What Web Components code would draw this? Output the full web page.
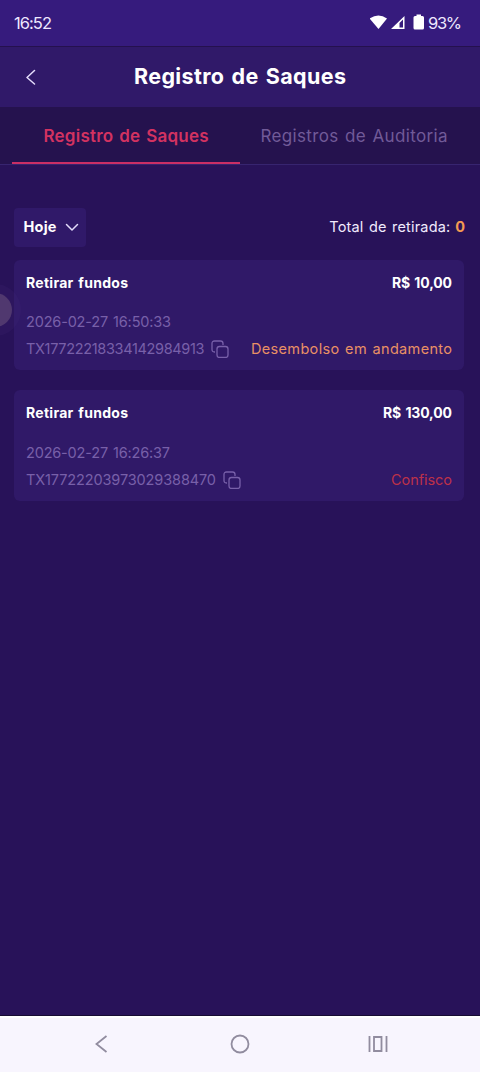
<!DOCTYPE html>
<html lang="pt-BR">
<head>
<meta charset="utf-8">
<title>Registro de Saques</title>
<style>
html,body{margin:0;height:100%;background:#281259}
body{font-family:Inter,"Noto Sans",sans-serif;color:#fff;overflow:hidden}
</style>
</head>
<body>
<withdraw-app></withdraw-app>
<script>
const define = (name, html, ready) => {
  const t = document.createElement('template');
  t.innerHTML = html;
  customElements.define(name, class extends HTMLElement {
    connectedCallback() {
      if (this.shadowRoot) return;
      this.attachShadow({mode: 'open'}).append(t.content.cloneNode(true));
      if (ready) ready(this, this.shadowRoot);
    }
  });
};

// A single line of text whose tracking is adjusted to fill the width in "w".
define('fit-text', `<style>
:host{display:block;white-space:nowrap;flex:none}
span{display:inline-block;word-spacing:.08em}
</style><span><slot></slot></span>`, (el, root) => {
  const w = +el.getAttribute('w');
  const span = root.querySelector('span');
  const n = el.textContent.length;
  const gap = (w - span.getBoundingClientRect().width) / (n - 1 || 1);
  span.style.letterSpacing = gap + 'px';
  span.style.marginRight = -gap + 'px';
});

define('status-bar', `<style>
:host{display:flex;box-sizing:border-box;height:47px;padding:0 18px 0 14px;align-items:center;background:#361b7d;border-bottom:1px solid #25114e;color:#eee8ff;font-size:16.5px;line-height:47px}
.icons{display:flex;margin-left:auto;align-items:center}
svg{display:block;fill:#fff}
</style>
<fit-text w="38">16:52</fit-text>
<div class="icons">
<svg width="58" height="20" viewBox="0 0 58 20"><path d="M-.5 5.500Q8.500 -.700 17 5.500L8.500 16Z"/><path fill-rule="evenodd" d="M21 16 34.500 3V16ZM29.500 10V14.500H33V6.500Z"/><path d="M46.500 1.500h4.500v1.500H52.500q1.500 0 1.500 1.500v10.500q0 1.500-1.500 1.500h-7.500q-1.500 0-1.500-1.500V4.500q0-1.500 1.500-1.500H46.500z"/></svg>
<fit-text w="34">93%</fit-text>
</div>`);

define('page-header', `<style>
:host{display:grid;grid-template-columns:60px 1fr 60px;align-items:center;height:60px;background:#301969}
svg{margin-left:25px;display:block}
.title{justify-self:center;font-size:21.500px;font-weight:700;line-height:58px;padding-bottom:2px}
</style>
<svg width="12" height="16" viewBox="0 0 12 16" fill="none" stroke="#e4dcfb" stroke-width="1.500" stroke-linecap="round" stroke-linejoin="round"><path d="M9.500 1.500 2 8.500 9.500 15"/></svg>
<div class="title"><slot></slot></div>`);

define('tab-bar', `<style>
:host{display:flex;box-sizing:border-box;height:58px;padding:0 12px;background:#25124e;border-bottom:1px solid #37246f}
div{flex:1;display:flex;box-sizing:border-box;justify-content:center;font-size:17px;line-height:58px;color:#715a98}
.on{color:#d33261;font-weight:600;border-bottom:2px solid #ca2f65}
</style>
<div class="on"><fit-text w="165">Registro de Saques</fit-text></div>
<div><fit-text w="187">Registros de Auditoria</fit-text></div>`);

define('filter-row', `<style>
:host{display:flex;justify-content:space-between;align-items:center;margin:43px 15px 0 14px;height:39px;font-size:14.500px;line-height:36px}
.pick{display:flex;align-items:center;box-sizing:border-box;width:72px;height:39px;padding-left:9.500px;gap:8px;background:#301969;border-radius:4px;font-weight:700}
.pick fit-text{padding-bottom:1.500px}
.sum{display:flex;gap:5px;color:#f1eafd;padding-bottom:1.500px}
b{color:#f39a52}
</style>
<div class="pick"><fit-text w="33">Hoje</fit-text><svg width="14" height="9" viewBox="0 0 14 9" fill="none" stroke="#e4dcfb" stroke-width="1.500" stroke-linecap="round" stroke-linejoin="round"><path d="M1.500 1.500 7 7 12.500 1.500"/></svg></div>
<div class="sum"><fit-text w="121">Total de retirada:</fit-text><b>0</b></div>`);

define('record-card', `<style>
:host{display:block;box-sizing:border-box;margin:0 16px 0 14px;padding:10px 12px 0;height:110px;background:#301968;border-radius:6px;font-size:14.500px}
.row{display:flex;align-items:center;justify-content:space-between;line-height:27px;height:27px}
.head{font-weight:700;font-size:14px;height:26px;line-height:26px}
.date{margin-top:var(--date-gap,12px)}
.muted{color:#7860a9;font-weight:400}
.id{display:flex;align-items:center;gap:7px}
svg{display:block}
::slotted([slot=status]){color:var(--status)}
</style>
<div class="row head"><fit-text w="102">Retirar fundos</fit-text><slot name="amount"></slot></div>
<div class="row date muted"><slot name="date"></slot></div>
<div class="row"><div class="id muted"><slot name="id"></slot><svg width="18" height="18" viewBox="0 0 18 18" fill="none" stroke="currentColor" stroke-width="1.300" stroke-linejoin="round"><path d="M4 12H3.500Q1 12 1 9.500V3.500Q1 1 3.500 1H9.500Q12 1 12 3.500V5"/><rect x="6" y="6.500" width="11" height="11" rx="2.500"/></svg></div><slot name="status"></slot></div>`);

define('nav-bar', `<style>
:host{display:grid;grid-template-columns:repeat(3,1fr);box-sizing:border-box;height:57px;padding:0 33px 1px;background:#f8f5fe;border-top:1px solid #170b33;box-shadow:inset 0 2px #fff;align-items:center;justify-items:center;flex:none}
svg{fill:none;stroke:#918c9f;stroke-width:1.800}
</style>
<svg width="20" height="20" viewBox="0 0 20 20"><path d="M14.500 2 4.500 10 14.500 18"/></svg>
<svg width="20" height="20" viewBox="0 0 20 20"><circle cx="10" cy="10" r="8.500"/></svg>
<svg width="20" height="20" viewBox="0 0 20 20"><path d="M1.500 2V18M18.500 2V18M6 3H13.500V17H6Z"/></svg>`);

define('withdraw-app', `<style>
:host{display:flex;flex-direction:column;height:1072px;width:480px;position:relative;background:#281259}
main{flex:1}
record-card{margin-top:13px}
record-card+record-card{margin-top:20px;height:111px;--date-gap:13px}
.bubble{position:absolute;left:-22px;top:293px;width:34px;height:34px;border-radius:50%;background:#50386f;box-shadow:0 0 0 9px #49317d26}
</style>
<status-bar></status-bar>
<page-header><fit-text w="212">Registro de Saques</fit-text></page-header>
<tab-bar></tab-bar>
<main>
<filter-row></filter-row>
<record-card style="--status:#e99065">
<fit-text slot="amount" w="60">R$ 10,00</fit-text><fit-text slot="date" w="145">2026-02-27 16:50:33</fit-text><fit-text slot="id" w="178.500">TX17722218334142984913</fit-text><fit-text slot="status" w="201">Desembolso em andamento</fit-text>
</record-card>
<record-card style="--status:#bd3149">
<fit-text slot="amount" w="69">R$ 130,00</fit-text><fit-text slot="date" w="144">2026-02-27 16:26:37</fit-text><fit-text slot="id" w="190">TX17722203973029388470</fit-text><fit-text slot="status" w="61">Confisco</fit-text>
</record-card>
</main>
<nav-bar></nav-bar>
<div class="bubble"></div>`);
</script>
</body>
</html>
